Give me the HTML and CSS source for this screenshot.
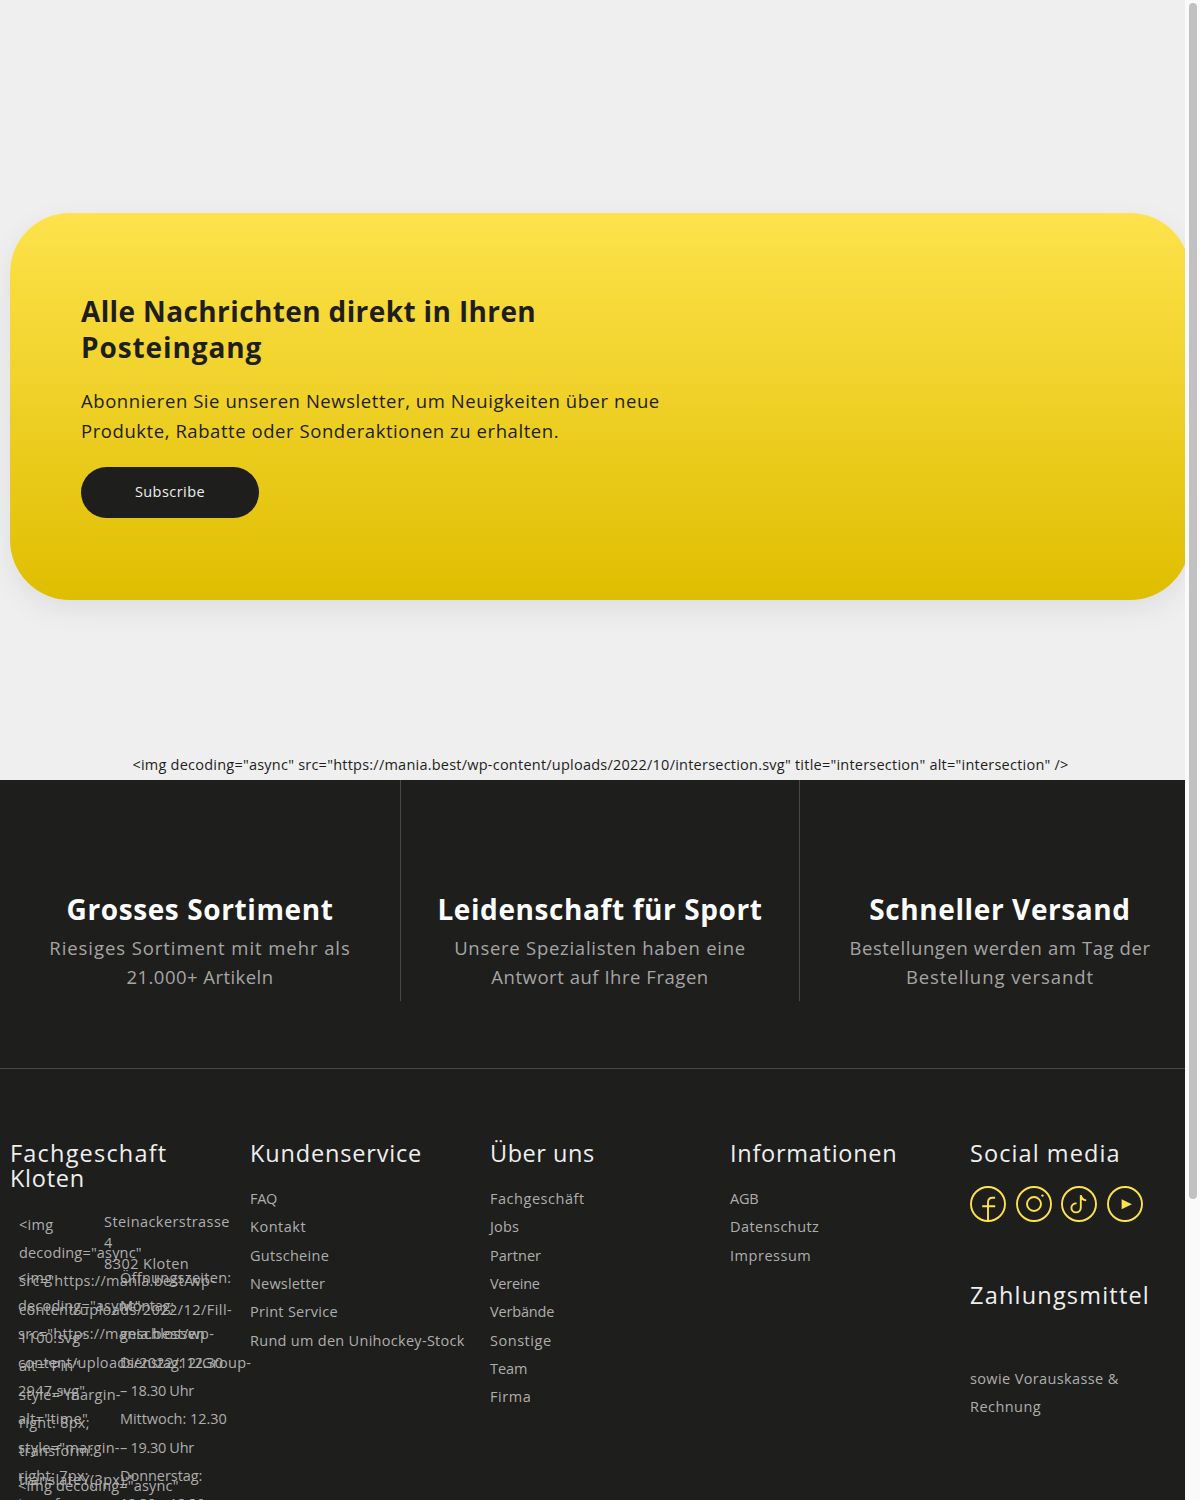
FILE: index.html
```html
<!DOCTYPE html>
<html lang="de">
<head>
<meta charset="utf-8">
<title>Mania</title>
<link rel="stylesheet" href="styles.css">
</head>
<body>
<div class="viewport">
  <div class="page">
    <section class="newsletter">
      <h2>Alle Nachrichten direkt in Ihren<br><span class="loose">Posteingang</span></h2>
      <p>Abonnieren Sie unseren Newsletter, um Neuigkeiten über neue<br>Produkte, Rabatte oder Sonderaktionen zu erhalten.</p>
      <a class="button">Subscribe</a>
    </section>
    <div class="intersection">&lt;img decoding="async" src="https://mania.best/wp-content/uploads/2022/10/intersection.svg" title="intersection" alt="intersection" /&gt;</div>
    <section class="features">
      <div class="feature"><h3>Grosses Sortiment</h3><p><span class="t120">Riesiges Sortiment mit mehr als</span><br><span class="t70">21.000+ Artikeln</span></p></div>
      <div class="feature"><h3>Leidenschaft für Sport</h3><p><span class="t100">Unsere Spezialisten haben eine</span><br><span class="t80">Antwort auf Ihre Fragen</span></p></div>
      <div class="feature"><h3>Schneller Versand</h3><p><span class="t85">Bestellungen werden am Tag der</span><br><span class="t120">Bestellung versandt</span></p></div>
    </section>
    <footer class="footer">
      <div class="column">
        <h4><span class="t150">Fachgeschaft</span><br><span class="t100">Kloten</span></h4>
        <ul class="contact">
          <li class="pin">
            <div class="source">&lt;img<br><span class="t45">decoding="async"</span><br>src="https://mania.best/wp-<br><span class="t70">content/uploads/2022/12/Fill-</span><br>1100.svg"<br>alt="Pin"<br>style="margin-<br>right: 8px;<br>transform:<br>translateY(3px);"</div>
            <div class="address">Steinackerstrasse<br>4<br>8302 Kloten</div>
          </li>
          <li class="time">
            <div class="source">&lt;img<br><span class="t45">decoding="async"</span><br>src="https://mania.best/wp-<br>content/uploads/2022/12/Group-<br>2947.svg"<br>alt="time"<br>style="margin-<br>right: 7px;<br>transform:</div>
            <div class="hours">Öffnungszeiten:<br><span class="t0">Montag:</span><br>geschlossen<br><span class="t20">Dienstag: 12.30</span><br><span class="tight">– 18.30 Uhr</span><br><span class="t20">Mittwoch: 12.30</span><br><span class="tight">– 19.30 Uhr</span><br><span class="t20">Donnerstag:</span><br><span class="tight">12.30 – 18.30</span></div>
          </li>
          <li class="phone"><div class="source t45">&lt;img decoding="async"</div></li>
        </ul>
      </div>
      <div class="column">
        <h4 class="t110">Kundenservice</h4>
        <ul class="links"><li class="t0">FAQ</li><li class="t80">Kontakt</li><li>Gutscheine</li><li class="t45">Newsletter</li><li>Print Service</li><li>Rund um den Unihockey-Stock</li></ul>
      </div>
      <div class="column">
        <h4 class="t80">Über uns</h4>
        <ul class="links"><li class="t80">Fachgeschäft</li><li class="t45">Jobs</li><li class="t30">Partner</li><li class="t0">Vereine</li><li class="t10">Verbände</li><li class="t80">Sonstige</li><li class="t20">Team</li><li class="t85">Firma</li></ul>
      </div>
      <div class="column">
        <h4 class="t100">Informationen</h4>
        <ul class="links"><li class="t0">AGB</li><li class="t70">Datenschutz</li><li class="t80">Impressum</li></ul>
      </div>
      <div class="column">
        <h4 class="t135">Social media</h4>
        <div class="social">
          <svg viewBox="0 0 36 36"><circle cx="18" cy="18" r="17"/><path d="M18 34.5V16.5q0-4.7 4.5-4.7h2.6M12.2 20.2h13"/></svg>
          <svg viewBox="0 0 36 36"><circle cx="18" cy="18" r="17"/><circle cx="18" cy="18" r="7"/><circle class="solid" cx="26.5" cy="9.6" r="1.2"/></svg>
          <svg viewBox="0 0 36 36"><circle cx="18" cy="18" r="17"/><path d="M15.6 17.4c-3.2-.2-5.2 2-5.2 4.4 0 2.8 2.1 4.6 4.6 4.6 2.8 0 4.8-2 4.8-4.9V9.3c.6 3.2 2.4 4.8 5.4 5.1"/></svg>
          <svg viewBox="0 0 36 36"><circle cx="18" cy="18" r="17"/><path class="solid" d="M14.6 13.3v10l10.3-5z"/></svg>
        </div>
        <h4 class="t150">Zahlungsmittel</h4>
        <p class="payment">sowie Vorauskasse &amp;<br><span class="t70">Rechnung</span></p>
      </div>
    </footer>
  </div>
  <div class="scrollbar"><div class="thumb"></div></div>
</div>
</body>
</html>
```
FILE: styles.css
```css
* { box-sizing: border-box; }
body {
  margin: 0;
  background: #efefef;
  color: #1e1e1c;
  font: 14.5px/28.35px "Open Sans", sans-serif;
}
h2, h3, h4, p, ul { margin: 0; padding: 0; font-weight: 400; }
ul { list-style: none; }

.viewport { display: flex; width: 1200px; height: 1500px; overflow: hidden; }
.page { flex: 0 0 1185px; height: 1500px; overflow: hidden; padding-top: 213px; }

.newsletter {
  width: 1180px;
  height: 386.5px;
  margin-left: 10px;
  padding: 80px 71px 0;
  border-radius: 60px;
  background: linear-gradient(#fde24b, #dfbe00);
  box-shadow: 0 10px 30px rgba(0, 0, 0, .07);
}
.newsletter h2 { font-size: 28px; line-height: 36px; font-weight: 700; letter-spacing: .38px; }
.newsletter .loose { letter-spacing: .9px; }
.newsletter p { margin-top: 20.5px; font-size: 18.5px; line-height: 30.5px; letter-spacing: .56px; }
.button {
  display: block;
  width: 178px;
  height: 51px;
  margin-top: 20.5px;
  border-radius: 26px;
  background: #1e1e1c;
  color: #efefef;
  line-height: 50px;
  text-align: center;
  letter-spacing: .45px;
}

.intersection {
  width: 1201px;
  height: 29px;
  margin-top: 151.5px;
  text-align: center;
  white-space: nowrap;
  letter-spacing: .23px;
}

.features {
  display: grid;
  grid-template-columns: repeat(3, 400px);
  width: 1200px;
  height: 288px;
  padding-bottom: 67px;
  background: #1e1e1c;
  color: #a5a5a4;
  text-align: center;
}
.feature { padding-top: 110.5px; white-space: nowrap; }
.feature:nth-child(2) { border: solid #484847; border-width: 0 1px; }
.feature h3 { color: #fff; font-size: 28px; line-height: 36px; font-weight: 700; letter-spacing: .6px; }
.feature p { margin-top: 7.5px; font-size: 18.5px; line-height: 28.5px; }

.footer {
  display: grid;
  grid-template-columns: repeat(5, 240px);
  width: 1200px;
  height: 432px;
  padding-top: 71.5px;
  border-top: 1px solid #484847;
  background: #1e1e1c;
  color: #aeaead;
}
.column { min-width: 0; padding-left: 10px; letter-spacing: .29px; white-space: nowrap; }
.column h4 { color: #efefef; font-size: 23.5px; line-height: 25.5px; }
.links { margin-top: 19px; }

.contact { margin-top: 19.2px; padding-left: 8px; }
.contact li { display: flex; }
.contact .source { min-width: 0; }
.pin { height: 53px; padding-left: 1px; }
.time { height: 208.2px; }
.pin .source { flex: 0 0 85px; width: 85px; }
.time .source { flex: 0 0 102px; width: 102px; }
.address { line-height: 21.3px; letter-spacing: .43px; }

.social { display: flex; gap: 9.7px; height: 116.5px; padding-top: 20px; }
.social svg { flex: none; width: 36px; height: 36px; fill: none; stroke: #fde24b; stroke-width: 1.9; }
.social .solid { fill: #fde24b; stroke: none; }
.payment { margin-top: 57px; letter-spacing: .37px; }

.scrollbar { flex: 0 0 15px; height: 1500px; padding: 3px 3px 0 4px; background: #fafafa; border-right: 1px solid #ededed; }
.thumb { width: 8px; height: 1196px; border-radius: 4px; background: #c1c1c1; }

.tight { letter-spacing: -.3px; }
.t0 { letter-spacing: -.27px; }
.t10 { letter-spacing: -.17px; }
.t20 { letter-spacing: -.05px; }
.t30 { letter-spacing: .03px; }
.t45 { letter-spacing: .18px; }
.t70 { letter-spacing: .45px; }
.t80 { letter-spacing: .53px; }
.t85 { letter-spacing: .58px; }
.t100 { letter-spacing: .73px; }
.t110 { letter-spacing: .83px; }
.t120 { letter-spacing: .93px; }
.t135 { letter-spacing: 1.08px; }
.t150 { letter-spacing: 1.2px; }
```
